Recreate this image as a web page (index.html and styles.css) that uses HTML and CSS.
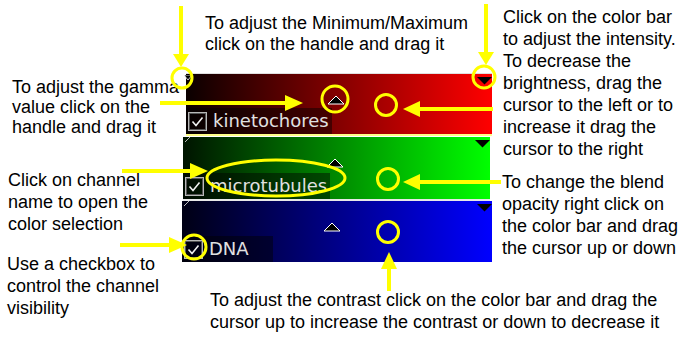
FILE: index.html
```html
<!DOCTYPE html>
<html lang="en">
<head>
    <meta charset="UTF-8">
    <meta name="viewport" content="width=device-width, initial-scale=1.0">
    <title>Channel controls</title>
    <link rel="stylesheet" href="styles.css">
</head>
<body>
    <div class="figure">
        <!-- the three colour bars -->
        <div class="channels">
            <div class="channel channel-red">
                <svg class="min-handle" width="8" height="6"><polygon points="0,0 8,0 4,5" fill="#000" stroke="#fff" stroke-width="0.8"/></svg>
                <svg class="gamma-handle" width="18" height="10"><polygon points="1,9 9,1 17,9" fill="#000" stroke="#fff" stroke-width="1"/></svg>
                <svg class="max-handle" width="15" height="8"><polygon points="0,0 15,0 7.5,7.5" fill="#000"/></svg>
                <label class="channel-label">
                    <span class="check"><svg width="19" height="19"><rect x="0.5" y="0.5" width="18" height="18" fill="none" stroke="#b8b8b8"/><rect x="1.5" y="1.5" width="16" height="16" fill="none" stroke="#555"/><polyline points="4.5,9.5 8,13.5 14.5,5.5" fill="none" stroke="#f0f0f0" stroke-width="1.6"/></svg></span>
                    <span class="name">kinetochores</span>
                </label>
            </div>
            <div class="channel channel-green">
                <svg class="min-handle tick" width="8" height="6"><line x1="1" y1="5" x2="6" y2="0" stroke="#bbb" stroke-width="1"/></svg>
                <svg class="gamma-handle" width="18" height="10"><polygon points="1,9 9,1 17,9" fill="#000" stroke="#fff" stroke-width="1"/></svg>
                <svg class="max-handle" width="15" height="8"><polygon points="0,0 15,0 7.5,7.5" fill="#000"/></svg>
                <label class="channel-label">
                    <span class="check"><svg width="19" height="19"><rect x="0.5" y="0.5" width="18" height="18" fill="none" stroke="#b8b8b8"/><rect x="1.5" y="1.5" width="16" height="16" fill="none" stroke="#555"/><polyline points="4.5,9.5 8,13.5 14.5,5.5" fill="none" stroke="#f0f0f0" stroke-width="1.6"/></svg></span>
                    <span class="name">microtubules</span>
                </label>
            </div>
            <div class="channel channel-blue">
                <svg class="min-handle tick" width="8" height="6"><line x1="1" y1="5" x2="6" y2="0" stroke="#bbb" stroke-width="1"/></svg>
                <svg class="gamma-handle" width="18" height="10"><polygon points="1,9 9,1 17,9" fill="#000" stroke="#fff" stroke-width="1"/></svg>
                <svg class="max-handle" width="15" height="8"><polygon points="0,0 15,0 7.5,7.5" fill="#000"/></svg>
                <label class="channel-label wide">
                    <span class="check"><svg width="19" height="19"><rect x="0.5" y="0.5" width="18" height="18" fill="none" stroke="#b8b8b8"/><rect x="1.5" y="1.5" width="16" height="16" fill="none" stroke="#555"/><polyline points="4.5,9.5 8,13.5 14.5,5.5" fill="none" stroke="#f0f0f0" stroke-width="1.6"/></svg></span>
                    <span class="name">DNA</span>
                </label>
            </div>
        </div>

        <!-- notes -->
        <p class="note note-minmax">To adjust the Minimum/Maximum<br>click on the handle and drag it</p>
        <p class="note note-intensity">Click on the color bar<br>to adjust the intensity.<br>To decrease the<br>brightness, drag the<br>cursor to the left or to<br>increase it drag the<br>cursor to the right</p>
        <p class="note note-gamma">To adjust the gamma<br>value click on the<br>handle and drag it</p>
        <p class="note note-name">Click on channel<br>name to open the<br>color selection</p>
        <p class="note note-check">Use a checkbox to<br>control the channel<br>visibility</p>
        <p class="note note-opacity">To change the blend<br>opacity right click on<br>the color bar and drag<br>the cursor up or down</p>
        <p class="note note-contrast">To adjust the contrast click on the color bar and drag the<br>cursor up to increase the contrast or down to decrease it</p>

        <!-- yellow arrows and rings -->
        <svg class="callouts" width="678" height="339" viewBox="0 0 678 339">
            <g stroke="#ffff00" stroke-width="4" fill="none">
                <line x1="181" y1="6" x2="181" y2="56"/>
                <line x1="486" y1="4" x2="486" y2="54"/>
                <line x1="160" y1="103" x2="287" y2="103"/>
                <line x1="493" y1="109" x2="418" y2="109"/>
                <line x1="122" y1="171" x2="192" y2="171"/>
                <line x1="501" y1="182" x2="418" y2="182"/>
                <line x1="120" y1="245" x2="171" y2="245"/>
                <line x1="389" y1="291" x2="389" y2="267"/>
            </g>
            <g fill="#ffff00">
                <polygon points="173,54 189,54 181,67"/>
                <polygon points="478,52 494,52 486,65"/>
                <polygon points="285,95 285,111 303,103"/>
                <polygon points="420,101 420,117 403,109"/>
                <polygon points="190,163 190,179 208,171"/>
                <polygon points="420,174 420,190 403,182"/>
                <polygon points="169,237 169,253 187,245"/>
                <polygon points="381,269 397,269 389,252"/>
            </g>
            <g stroke="#ffff00" stroke-width="3" fill="none">
                <circle cx="182" cy="78" r="10"/>
                <circle cx="484" cy="77" r="11"/>
                <circle cx="335" cy="99" r="13"/>
                <circle cx="386" cy="105" r="10.5"/>
                <circle cx="388" cy="179" r="10.5"/>
                <circle cx="388" cy="232" r="10.5"/>
                <circle cx="194" cy="247" r="12"/>
                <ellipse cx="276" cy="178" rx="69" ry="18"/>
            </g>
        </svg>
    </div>
</body>
</html>
```

FILE: styles.css
```css
body {
    margin: 0;
    background-color: #fff;
    font-family: 'Liberation Sans', Arial, sans-serif;
}

.figure {
    position: relative;
    width: 678px;
    height: 339px;
    overflow: hidden;
}

/* colour bars */
.channels {
    position: absolute;
    left: 183px;
    top: 73px;
    width: 309px;
    display: flex;
    flex-direction: column;
}

.channel {
    position: relative;
    display: flex;
    flex-direction: column;
    justify-content: flex-end;
    align-items: flex-start;
}

.channel-red {
    height: 60px;
    margin-left: 3px;
    background: linear-gradient(to right, #0a0000 0%, #ff0000 100%);
    border-top: 1px solid #e0e0e0;
    border-bottom: 2px solid #ffff88;
}

.channel-green {
    height: 62px;
    margin-top: 1px;
    margin-right: 2px;
    background: linear-gradient(to right, #001400 0%, #00ff00 100%);
    border-bottom: 2px solid #e8e8e8;
}

.channel-blue {
    height: 61px;
    margin-left: -1px;
    background: linear-gradient(to right, #000014 0%, #0000ff 100%);
}

.min-handle {
    position: absolute;
    left: -2px;
    top: 1px;
}

.min-handle.tick {
    left: 1px;
    top: 0;
}

.gamma-handle {
    position: absolute;
    left: 141px;
    top: 21px;
}

.channel-green .gamma-handle {
    left: 143px;
}

.max-handle {
    position: absolute;
    right: 0;
    top: 3px;
}

.channel-label {
    display: flex;
    align-items: center;
    gap: 6px;
    height: 26px;
    padding: 0 3px 0 2px;
    background-color: rgba(0, 0, 0, 0.45);
}

.channel-label.wide {
    min-width: 86px;
}

.check {
    display: flex;
    width: 19px;
    height: 19px;
}

.name {
    font-family: 'DejaVu Sans', sans-serif;
    font-size: 18px;
    color: #e0e0e0;
    line-height: 26px;
}

/* annotations */
.note {
    position: absolute;
    margin: 0;
    font-size: 18px;
    line-height: 22px;
    color: #000;
    white-space: nowrap;
}

.note-minmax {
    left: 205px;
    top: 13px;
    line-height: 21px;
}

.note-intensity {
    left: 503px;
    top: 6px;
}

.note-gamma {
    left: 12px;
    top: 77px;
    line-height: 20px;
}

.note-name {
    left: 8px;
    top: 169px;
}

.note-check {
    left: 7px;
    top: 253px;
}

.note-opacity {
    left: 502px;
    top: 171px;
}

.note-contrast {
    left: 210px;
    top: 289px;
}

.callouts {
    position: absolute;
    left: 0;
    top: 0;
    pointer-events: none;
}
```
